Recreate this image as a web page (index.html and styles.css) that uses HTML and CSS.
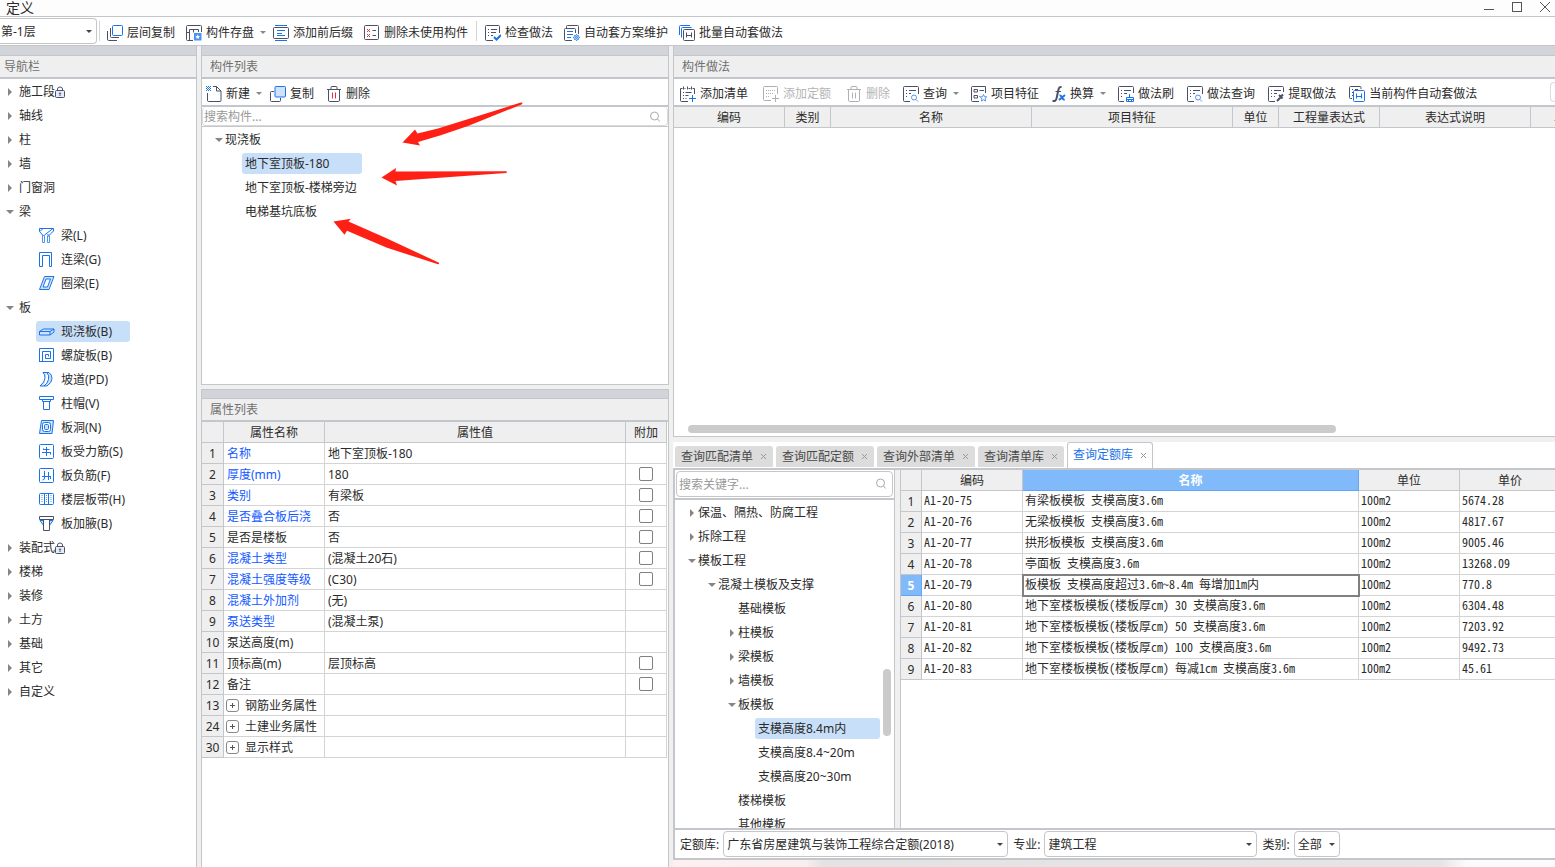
FILE: index.html
```html
<!DOCTYPE html>
<html lang="zh-CN">
<head>
<meta charset="utf-8">
<title>定义</title>
<link rel="stylesheet" href="styles.css">
</head>
<body>
<svg class="sprite" aria-hidden="true">
  <symbol id="i-layercopy" viewBox="0 0 16 16"><rect class="b" x="5.5" y="0.5" width="10" height="10" rx="1"/><path class="d" d="M3.5 3v8.5q0 1 1 1H12M.5 6v8q0 1.500 1 1.500H10"/></symbol>
  <symbol id="i-save" viewBox="0 0 16 16"><path class="d" d="M7 15.500H1.500q-1 0-1-1v-13q0-1 1-1h13q1 0 1 1V7M3.500 15.500v-11h9V7M3.500 7.500h-3M7.500 7.500v-3"/><path class="bf" d="M8 8h7.500v7.500H8z"/><path class="w" d="M11.700 9.500l.7 1.500 1.600.2-1.200 1 .4 1.700-1.500-.9-1.500.9.4-1.700-1.200-1 1.600-.2z"/></symbol>
  <symbol id="i-affix" viewBox="0 0 16 16"><path class="b" d="M2 .5h12M2 15.500h12M4 5.500h8M4 8.500h5M4 10.500h8"/><rect class="d" x=".5" y="2.500" width="15" height="11" rx="1"/></symbol>
  <symbol id="i-unused" viewBox="0 0 16 16"><rect class="d" x=".5" y=".5" width="14" height="14" rx="1"/><path class="r" d="M3 4l3 3M6 4L3 7M3 9l3 3M6 9l-3 3"/><path class="d" d="M8.500 5.500H12M8.500 10.500H12"/></symbol>
  <symbol id="i-check" viewBox="0 0 16 16"><path class="d" d="M8 15.500H1.500q-1 0-1-1v-13q0-1 1-1h12q1 0 1 1V8M3 4.500h1M6 4.500h6M3 7.500h1M6 7.500h5M3 10.500h1M6 10.500h2"/><path class="b2" d="M9 12l2.500 2.500L16 10"/></symbol>
  <symbol id="i-scheme" viewBox="0 0 16 16"><path class="d" d="M8 15.500H1.500q-1 0-1-1v-10q0-1 1-1h9q1 0 1 1V8M2.500 3.500V1.500q0-1 1-1h10q1 0 1 1V9"/><path class="b" d="M3 6.500h6M3 9.500h6M3 12.500h4"/><circle class="lb" cx="12.500" cy="12.500" r="2.500"/><path class="lb dot" d="M12.500 9v7M9 12.500h7M10 10l5 5M15 10l-5 5"/></symbol>
  <symbol id="i-batch" viewBox="0 0 16 16"><path class="b" d="M.5 10V1.500q0-1 1-1H11M2.500 12.500V3.500q0-1 1-1h9"/><rect class="d" x="4.500" y="4.500" width="11" height="11" rx="1"/><path class="d" d="M7.500 7.500v5M12.500 7.500v5M7.500 10.500h5"/></symbol>
  <symbol id="i-new" viewBox="0 0 16 16"><path class="d" d="M1.500 7v7q0 1.500 1 1.500h11.500q1 0 1-1V5l-4.500-4.500H7M10.500.5V5H15"/><path class="b dot" d="M0 .5h5M0 2.500h5M0 4.500h5M1 1.500h4M1 3.500h4"/></symbol>
  <symbol id="i-copy" viewBox="0 0 16 16"><rect class="bl" x="5" y=".5" width="10.500" height="10.500" rx="1"/><path class="d" d="M4 5.500H1.500q-1 0-1 1v8q0 1 1 1h8q1 0 1-1V12"/></symbol>
  <symbol id="i-trash" viewBox="0 0 16 16"><path class="d" d="M1 3.500h14M5 3V1.500q0-1 1-1h4q1 0 1 1V3M2.500 4v10q0 1.500 1 1.500h9q1 0 1-1.500V4"/><path class="r" d="M6.500 6.500v6M9.500 6.500v6"/></symbol>
  <symbol id="i-addlist" viewBox="0 0 16 16"><path class="d" d="M8 15.500H1.500q-1 0-1-1v-12h2M14.500 8V2.500h-2M4.500 2.500h1M8.500 2.500h2M3.500.5v3M7.500.5v3M11.500.5v3M3 6.500h1M5.500 6.500h6M3 9.500h1M5.500 9.500h3M3 12.500h1M5.500 12.500h1"/><path class="b" d="M12.500 9v7M9 12.500h7"/></symbol>
  <symbol id="i-addquota" viewBox="0 0 16 16"><path class="d" d="M8 14.500H1.500q-1 0-1-1v-12q0-1 1-1h12q1 0 1 1V8"/><path class="d dot" d="M3 4.500h10M3 7.500h8M3 10.500h4"/><path class="d" d="M12.500 9v7M9 12.500h7"/></symbol>
  <symbol id="i-query" viewBox="0 0 16 16"><path class="d" d="M7 15.500H1.500q-1 0-1-1v-13q0-1 1-1h13q1 0 1 1V8M3 4.500h1M6 4.500h7M3 7.500h1M6 7.500h2M3 10.500h1"/><circle class="lb" cx="11" cy="11.500" r="2.500"/><path class="lb" d="M13 13.500l2 2"/></symbol>
  <symbol id="i-feature" viewBox="0 0 16 16"><path class="d" d="M8 15.500H1.500q-1 0-1-1v-13q0-1 1-1h13V7M3 3.500h3.500v2.500H3zM3 9.500h3.500v2.500H3zM8.500 4.500H13M8.500 10.500H9"/><path class="lb" d="M12.500 8.500l1 2.200 2.300.2-1.700 1.600.5 2.500-2.100-1.300-2.100 1.300.5-2.500-1.700-1.600 2.300-.2z"/></symbol>
  <symbol id="i-fx" viewBox="0 0 14 16"><path class="d2" d="M9.500 1.500Q7.500 0 6.500 3.500L4.500 12.500Q3.500 16 .5 14.700"/><path class="d" d="M3.500 5.500h5.500"/><path class="b2" d="M7.500 9.500q1.500-.5 2.500 2t2.700 2M13 9l-6 5"/></symbol>
  <symbol id="i-brush" viewBox="0 0 16 16"><path class="d" d="M6 15.500H1.500q-1 0-1-1v-13q0-1 1-1h13q1 0 1 1V7M3 4.500h1M6 4.500h7M3 7.500h1M6 7.500h3M3 10.500h1"/><path class="b" d="M11.500 8v3M8.500 11.500h7v4h-7zM10.500 13.500v2M13.500 13.500v2M8.500 13.500h7"/></symbol>
  <symbol id="i-pick" viewBox="0 0 16 16"><path class="d" d="M7 15.500H1.500q-1 0-1-1v-13q0-1 1-1h13q1 0 1 1V6M3 4.500h1M6 4.500h7M3 7.500h1M6 7.500h3M3 10.500h1M6 10.500h1"/><path class="d2" d="M9 15l4-4M11 9l3.500 3.500M13 10.500l2-2"/></symbol>
  <symbol id="i-auto" viewBox="0 0 16 16"><path class="d" d="M3 12.500H1.500q-1 0-1-1v-10q0-1 1-1H11q1 0 1 1V3M3 3.500h1M3 6.500h1M3 9.500h1M6 3.500h3"/><rect class="b" x="4.500" y="4.500" width="11" height="11" rx="1"/><path class="b" d="M7.500 7.500v5M12.500 7.500v5M7.500 10.500h5"/></symbol>
  <symbol id="i-search" viewBox="0 0 16 16"><circle cx="7.500" cy="7" r="4"/><path d="M10.500 10l2 2.500"/></symbol>
  <symbol id="i-lock" viewBox="0 0 10 12"><rect class="dl" x=".5" y="4.500" width="9" height="7" rx="1"/><path class="d" d="M2.500 4.500V3q0-2 2.500-2t2.500 2v1.500M5 8.500v1.500"/><circle class="d" cx="5" cy="7.500" r=".7"/></symbol>
  <symbol id="i-close" viewBox="0 0 7 7"><path d="M1 1l5 5M6 1l-5 5"/></symbol>
  <symbol id="n-beam" viewBox="0 0 16 16"><path class="b" d="M.5.5h14v2.500L9 8.500M.5.500v3l4 4.500 1-1L14 .5M1 3.500L4 .5M9 8.500V6"/><path class="lb" d="M3.500 7v7.500h2V8M8.500 14.500h2V8M8.500 14.500V8"/></symbol>
  <symbol id="n-link" viewBox="0 0 16 16"><path class="b" d="M.5 14.500V.5h12v14h-2v-11h-7v11z"/></symbol>
  <symbol id="n-ring" viewBox="0 0 16 16"><path class="bl" d="M5.500.5H15L10 13.500H.5z"/><path class="bw" d="M7 3h4.500L8.500 11H4z"/></symbol>
  <symbol id="n-slab" viewBox="0 0 16 16"><path class="bl" d="M.5 7.500l4-2.500h10.500v3l-4 3H.5zM.5 7.500H11l4-2.500M11 7.500v3.500"/></symbol>
  <symbol id="n-spiral" viewBox="0 0 16 16"><path class="b" d="M0 13.500h14.500V.5H.5v13M3.500 14V3.500h8v7h-5v-4h3v2"/></symbol>
  <symbol id="n-ramp" viewBox="0 0 16 16"><path class="bl" d="M4 .5h6q3 2 3 6t-5 7.500H1Q6 10 6 6T4 .5z"/><path class="bw" d="M8 .5q2.500 3 1.500 7t-4.500 6.500"/></symbol>
  <symbol id="n-cap" viewBox="0 0 16 16"><path class="b" d="M.5.5h14v3h-14zM3.500 3.500v2h8v-2M4.500 5.500v8h6v-8"/></symbol>
  <symbol id="n-hole" viewBox="0 0 16 16"><path class="bl" d="M2.500.5h12l-1.500 13H.5z"/><rect class="bw" x="3.500" y="2.500" width="8" height="9" rx="2"/><rect class="bl" x="5.500" y="4.500" width="4" height="5" rx="1"/></symbol>
  <symbol id="n-force" viewBox="0 0 16 16"><rect class="b" x=".5" y=".5" width="14" height="14" rx="1"/><path class="b" d="M3 8.500h9M4.500 5.500h6M4.500 6V4.500M7.500 3v9M11.500 8.500v2"/></symbol>
  <symbol id="n-neg" viewBox="0 0 16 16"><rect class="b" x=".5" y=".5" width="14" height="14" rx="1"/><path class="b" d="M3 8.500h9M5.500 3v7q0 2-2 2M9.500 4v8M11.500 9v2"/></symbol>
  <symbol id="n-band" viewBox="0 0 16 16"><rect class="b" x=".5" y="1.500" width="14" height="11" rx="1"/><path class="b" d="M5.500 2v11M9.500 2v11"/><path class="lb dot" d="M3 3v8M7.500 3v8M12 3v8"/></symbol>
  <symbol id="n-haunch" viewBox="0 0 16 16"><path class="bl" d="M1 4.500h13L10 10H5z"/><path class="dw" d="M.5.5h14v3h-14zM4.500 3.500v11h6v-11"/></symbol>
</svg>

<div class="app">
  <header class="titlebar">
    <h1 class="titlebar-text">定义</h1>
    <div class="window-controls">
      <button aria-label="最小化"><svg viewBox="0 0 10 10"><path d="M0 7.500h10"/></svg></button>
      <button aria-label="最大化"><svg viewBox="0 0 10 10"><rect x=".5" y=".5" width="9" height="9"/></svg></button>
      <button aria-label="关闭"><svg viewBox="0 0 10 10"><path d="M0 0l10 10M10 0L0 10"/></svg></button>
    </div>
  </header>

  <div class="toolbar main-toolbar">
    <span class="select floor-select"><select aria-label="楼层"><option>第-1层</option></select></span>
    <span class="divider"></span>
    <button class="tool"><svg><use href="#i-layercopy"/></svg>层间复制</button>
    <button class="tool has-caret"><svg><use href="#i-save"/></svg>构件存盘</button>
    <button class="tool"><svg><use href="#i-affix"/></svg>添加前后缀</button>
    <button class="tool"><svg><use href="#i-unused"/></svg>删除未使用构件</button>
    <span class="divider"></span>
    <button class="tool"><svg><use href="#i-check"/></svg>检查做法</button>
    <button class="tool"><svg><use href="#i-scheme"/></svg>自动套方案维护</button>
    <button class="tool"><svg><use href="#i-batch"/></svg>批量自动套做法</button>
  </div>

  <main class="workspace">
    <nav class="panel nav-panel">
      <div class="strip"></div>
      <h2 class="panel-title nav-title">导航栏</h2>
      <ul class="tree">
        <li class="node closed">施工段<svg class="lock"><use href="#i-lock"/></svg></li>
        <li class="node closed">轴线</li>
        <li class="node closed">柱</li>
        <li class="node closed">墙</li>
        <li class="node closed">门窗洞</li>
        <li class="node open">梁</li>
        <li class="leaf"><a href="#beam"><svg><use href="#n-beam"/></svg>梁(L)</a></li>
        <li class="leaf"><a href="#link"><svg><use href="#n-link"/></svg>连梁(G)</a></li>
        <li class="leaf"><a href="#ring"><svg><use href="#n-ring"/></svg>圈梁(E)</a></li>
        <li class="node open">板</li>
        <li class="leaf"><a class="selected" href="#slab"><svg><use href="#n-slab"/></svg>现浇板(B)</a></li>
        <li class="leaf"><a href="#spiral"><svg><use href="#n-spiral"/></svg>螺旋板(B)</a></li>
        <li class="leaf"><a href="#ramp"><svg><use href="#n-ramp"/></svg>坡道(PD)</a></li>
        <li class="leaf"><a href="#cap"><svg><use href="#n-cap"/></svg>柱帽(V)</a></li>
        <li class="leaf"><a href="#hole"><svg><use href="#n-hole"/></svg>板洞(N)</a></li>
        <li class="leaf"><a href="#force"><svg><use href="#n-force"/></svg>板受力筋(S)</a></li>
        <li class="leaf"><a href="#neg"><svg><use href="#n-neg"/></svg>板负筋(F)</a></li>
        <li class="leaf"><a href="#band"><svg><use href="#n-band"/></svg>楼层板带(H)</a></li>
        <li class="leaf"><a href="#haunch"><svg><use href="#n-haunch"/></svg>板加腋(B)</a></li>
        <li class="node closed">装配式<svg class="lock"><use href="#i-lock"/></svg></li>
        <li class="node closed">楼梯</li>
        <li class="node closed">装修</li>
        <li class="node closed">土方</li>
        <li class="node closed">基础</li>
        <li class="node closed">其它</li>
        <li class="node closed">自定义</li>
      </ul>
    </nav>

    <div class="middle">
      <section class="panel component-panel">
        <div class="strip"></div>
        <h2 class="panel-title">构件列表</h2>
        <div class="toolbar panel-toolbar component-toolbar">
          <button class="tool has-caret"><svg><use href="#i-new"/></svg>新建</button>
          <button class="tool"><svg><use href="#i-copy"/></svg>复制</button>
          <button class="tool"><svg><use href="#i-trash"/></svg>删除</button>
        </div>
        <div class="search component-search">
          <input type="text" aria-label="搜索构件" placeholder="搜索构件...">
          <svg><use href="#i-search"/></svg>
        </div>
        <ul class="tree component-tree">
          <li class="node open">现浇板</li>
          <li class="item"><span class="selected">地下室顶板-180</span></li>
          <li class="item"><span>地下室顶板-楼梯旁边</span></li>
          <li class="item"><span>电梯基坑底板</span></li>
        </ul>
        <svg class="arrows" viewBox="330 100 200 170" aria-hidden="true">
          <path d="M402.500 142.500L415 129.500 417.500 133.500 438 128.500 521 102.500Q524 102.500 521.500 104.500L468 126 440 135.500 418 142 420 145.500z"/>
          <path d="M381.500 177.500L396 168 395.500 171.500 506 171.300Q508 172 506 173L433 178.300 395.500 181 397 185.500z"/>
          <path d="M333.500 221.500L351 218.700 348.500 221.500 387 238.500 438.500 262.500Q440 264 438 264.300L387 247.700 347 230.700 344.500 234.800z"/>
        </svg>
      </section>

      <section class="panel property-panel">
        <div class="strip"></div>
        <h2 class="panel-title">属性列表</h2>
        <table class="grid property-grid">
          <colgroup><col class="c-num"><col class="c-name"><col><col class="c-extra"></colgroup>
          <thead><tr><th></th><th>属性名称</th><th>属性值</th><th>附加</th></tr></thead>
          <tbody>
            <tr><th>1</th><td class="blue">名称</td><td>地下室顶板-180</td><td></td></tr>
            <tr><th>2</th><td class="blue">厚度(mm)</td><td>180</td><td><input type="checkbox" aria-label="厚度附加"></td></tr>
            <tr><th>3</th><td class="blue">类别</td><td>有梁板</td><td><input type="checkbox" aria-label="类别附加"></td></tr>
            <tr><th>4</th><td class="blue">是否叠合板后浇</td><td>否</td><td><input type="checkbox" aria-label="是否叠合板后浇附加"></td></tr>
            <tr><th>5</th><td>是否是楼板</td><td>否</td><td><input type="checkbox" aria-label="是否是楼板附加"></td></tr>
            <tr><th>6</th><td class="blue">混凝土类型</td><td>(混凝土20石)</td><td><input type="checkbox" aria-label="混凝土类型附加"></td></tr>
            <tr><th>7</th><td class="blue">混凝土强度等级</td><td>(C30)</td><td><input type="checkbox" aria-label="混凝土强度等级附加"></td></tr>
            <tr><th>8</th><td class="blue">混凝土外加剂</td><td>(无)</td><td></td></tr>
            <tr><th>9</th><td class="blue">泵送类型</td><td>(混凝土泵)</td><td></td></tr>
            <tr><th>10</th><td>泵送高度(m)</td><td></td><td></td></tr>
            <tr><th>11</th><td>顶标高(m)</td><td>层顶标高</td><td><input type="checkbox" aria-label="顶标高附加"></td></tr>
            <tr><th>12</th><td>备注</td><td></td><td><input type="checkbox" aria-label="备注附加"></td></tr>
            <tr><th>13</th><td><button class="expand" aria-label="展开钢筋业务属性"></button>钢筋业务属性</td><td></td><td></td></tr>
            <tr><th>24</th><td><button class="expand" aria-label="展开土建业务属性"></button>土建业务属性</td><td></td><td></td></tr>
            <tr><th>30</th><td><button class="expand" aria-label="展开显示样式"></button>显示样式</td><td></td><td></td></tr>
          </tbody>
        </table>
      </section>
    </div>

    <div class="right">
      <section class="panel method-panel">
        <div class="strip"></div>
        <h2 class="panel-title">构件做法</h2>
        <div class="toolbar panel-toolbar method-toolbar">
          <div class="tool-group">
            <button class="tool"><svg><use href="#i-addlist"/></svg>添加清单</button>
            <button class="tool" disabled><svg><use href="#i-addquota"/></svg>添加定额</button>
            <button class="tool" disabled><svg><use href="#i-trash"/></svg>删除</button>
          </div>
          <button class="tool has-caret"><svg><use href="#i-query"/></svg>查询</button>
          <button class="tool"><svg><use href="#i-feature"/></svg>项目特征</button>
          <button class="tool has-caret"><svg class="fx"><use href="#i-fx"/></svg>换算</button>
          <button class="tool"><svg><use href="#i-brush"/></svg>做法刷</button>
          <button class="tool"><svg><use href="#i-query"/></svg>做法查询</button>
          <button class="tool"><svg><use href="#i-pick"/></svg>提取做法</button>
          <button class="tool"><svg><use href="#i-auto"/></svg>当前构件自动套做法</button>
          <button class="more" aria-label="更多"></button>
        </div>
        <table class="grid method-grid">
          <colgroup><col class="m-code"><col class="m-short"><col class="m-long"><col class="m-long"><col class="m-short"><col class="m-expr"><col class="m-desc"><col class="m-last"></colgroup>
          <thead><tr><th>编码</th><th>类别</th><th>名称</th><th>项目特征</th><th>单位</th><th>工程量表达式</th><th>表达式说明</th><th>单价</th></tr></thead>
        </table>
        <div class="scroll-x"><div class="thumb"></div></div>
      </section>

      <section class="query-panel">
        <div class="tabs" role="tablist">
          <button class="tab" role="tab">查询匹配清单<svg><use href="#i-close"/></svg></button>
          <button class="tab" role="tab">查询匹配定额<svg><use href="#i-close"/></svg></button>
          <button class="tab" role="tab">查询外部清单<svg><use href="#i-close"/></svg></button>
          <button class="tab" role="tab">查询清单库<svg><use href="#i-close"/></svg></button>
          <button class="tab active" role="tab" aria-selected="true">查询定额库<svg><use href="#i-close"/></svg></button>
        </div>
        <div class="query-body">
          <div class="chapters">
            <div class="search chapter-search">
              <input type="text" aria-label="搜索关键字" placeholder="搜索关键字...">
              <svg><use href="#i-search"/></svg>
            </div>
            <ul class="tree chapter-tree">
              <li class="node closed l1">保温、隔热、防腐工程</li>
              <li class="node closed l1">拆除工程</li>
              <li class="node open l1">模板工程</li>
              <li class="node open l2">混凝土模板及支撑</li>
              <li class="node l3">基础模板</li>
              <li class="node closed l3">柱模板</li>
              <li class="node closed l3">梁模板</li>
              <li class="node closed l3">墙模板</li>
              <li class="node open l3">板模板</li>
              <li class="item"><span class="selected">支模高度8.4m内</span></li>
              <li class="item"><span>支模高度8.4~20m</span></li>
              <li class="item"><span>支模高度20~30m</span></li>
              <li class="node l3">楼梯模板</li>
              <li class="node l3">其他模板</li>
            </ul>
            <div class="thumb-y"></div>
          </div>
          <div class="quota">
            <table class="grid quota-grid">
              <colgroup><col class="q-num"><col class="q-mid"><col class="q-name"><col class="q-mid"><col class="q-mid"></colgroup>
              <thead><tr><th></th><th>编码</th><th class="on">名称</th><th>单位</th><th>单价</th></tr></thead>
              <tbody>
                <tr><th>1</th><td>A1-20-75</td><td>有梁板模板 支模高度3.6m</td><td>100m2</td><td>5674.28</td></tr>
                <tr><th>2</th><td>A1-20-76</td><td>无梁板模板 支模高度3.6m</td><td>100m2</td><td>4817.67</td></tr>
                <tr><th>3</th><td>A1-20-77</td><td>拱形板模板 支模高度3.6m</td><td>100m2</td><td>9005.46</td></tr>
                <tr><th>4</th><td>A1-20-78</td><td>亭面板 支模高度3.6m</td><td>100m2</td><td>13268.09</td></tr>
                <tr><th class="on">5</th><td>A1-20-79</td><td class="focused">板模板 支模高度超过3.6m~8.4m 每增加1m内</td><td>100m2</td><td>770.8</td></tr>
                <tr><th>6</th><td>A1-20-80</td><td>地下室楼板模板(楼板厚cm) 30 支模高度3.6m</td><td>100m2</td><td>6304.48</td></tr>
                <tr><th>7</th><td>A1-20-81</td><td>地下室楼板模板(楼板厚cm) 50 支模高度3.6m</td><td>100m2</td><td>7203.92</td></tr>
                <tr><th>8</th><td>A1-20-82</td><td>地下室楼板模板(楼板厚cm) 100 支模高度3.6m</td><td>100m2</td><td>9492.73</td></tr>
                <tr><th>9</th><td>A1-20-83</td><td>地下室楼板模板(楼板厚cm) 每减1cm 支模高度3.6m</td><td>100m2</td><td>45.61</td></tr>
              </tbody>
            </table>
          </div>
        </div>
        <div class="filters">
          <label for="library">定额库:</label>
          <span class="select library"><select id="library"><option>广东省房屋建筑与装饰工程综合定额(2018)</option></select></span>
          <label for="major">专业:</label>
          <span class="select major"><select id="major"><option>建筑工程</option></select></span>
          <label for="kind">类别:</label>
          <span class="select kind"><select id="kind"><option>全部</option></select></span>
        </div>
        <div class="backdrop"></div>
      </section>
    </div>
  </main>
</div>
</body>
</html>
```
FILE: styles.css
```css
:root {
  --line: #c3c6cb;
  --grid: #d4d4d4;
  --head: #efefef;
  --strip: #d2d4da;
  --select: #c8dff9;
  --dark: #4b5068;
  --blue: #1a73e8;
  --light-blue: #4d94ee;
  --pale: #cfe2fb;
}

* { box-sizing: border-box; }

body {
  margin: 0;
  background: #f0f0f0;
  color: #2b2b2b;
  font: 12px/20px "Noto Sans", "Noto Sans CJK SC", sans-serif;
}

button, input, select { font: inherit; color: inherit; }
button { border: 0; padding: 0; background: none; }
h1, h2, ul { margin: 0; padding: 0; font-weight: normal; list-style: none; }
a { color: inherit; text-decoration: none; }
svg { flex: none; width: 16px; height: 16px; fill: none; }

.sprite { position: absolute; width: 0; height: 0; }
.d, .d2, .dl, .dw { stroke: var(--dark); }
.b, .b2, .bl, .bw { stroke: var(--blue); }
.d2, .b2 { stroke-width: 2px; }
.dl { fill: #e3ecf8; }
.dw, .bw { fill: #fff; }
.bl { fill: var(--pale); }
.bf { fill: var(--light-blue); }
.lb { stroke: var(--light-blue); }
.w { fill: #fff; }
.r { stroke: #e0343c; }
.dot { stroke-dasharray: 1px 1px; }

.app { display: flex; flex-direction: column; height: 100vh; overflow: hidden; }

/* Title bar and main toolbar */
.titlebar {
  display: flex;
  justify-content: space-between;
  height: 17px;
  flex: none;
  padding-left: 6px;
  background: #fdfdfd;
  border-bottom: 1px solid var(--line);
}
.titlebar-text { font-size: 14px; line-height: 15px; }
.window-controls { display: flex; gap: 18px; padding: 2px 5px 0 0; align-items: flex-start; }
.window-controls button { display: flex; }
.window-controls svg { width: 10px; height: 10px; stroke: #555; }

.toolbar { display: flex; align-items: center; background: #fff; flex: none; white-space: nowrap; }
.main-toolbar { height: 29px; border-bottom: 1px solid var(--line); gap: 11px; }
.main-toolbar .divider { width: 1px; height: 20px; background: #d4d4d4; margin: 0 -3px; }
.main-toolbar .floor-select + .divider { margin: 0 -4px 0 -9px; }
.tool { display: flex; align-items: center; gap: 4px; padding-top: 3px; line-height: 20px; }
.tool .fx { width: 14px; }
.tool:disabled { color: #b4b4b4; }
.tool:disabled svg { filter: grayscale(1); opacity: .45; }
.has-caret::after {
  content: "";
  margin: 0 -4px 0 2px;
  border: 3px solid transparent;
  border-top: 3px solid #888;
  border-bottom: 0;
}
.method-toolbar .has-caret::after { margin-right: -1px; }

.select { position: relative; display: flex; }
.select select {
  width: 100%;
  height: 26px;
  appearance: none;
  padding: 2px 14px 0 3px;
  border: 1px solid #c6c6c6;
  border-radius: 4px;
  background: #fff;
}
.select::after {
  content: "";
  position: absolute;
  right: 5px;
  top: 12px;
  border: 3px solid transparent;
  border-top: 3px solid #444;
  border-bottom: 0;
  pointer-events: none;
}
.floor-select { width: 97px; }
.floor-select select { border-left: 0; padding-left: 1px; border-radius: 0 4px 4px 0; }

/* Docked panels */
.workspace { display: grid; grid-template-columns: 197px 468px 1fr; column-gap: 4px; flex: 1; min-height: 0; }
.panel { background: #fff; border: 1px solid var(--line); border-top: 0; display: flex; flex-direction: column; position: relative; min-width: 0; overflow: hidden; }
.strip { height: 10px; background: var(--strip); border-bottom: 1px solid var(--line); flex: none; }
.panel-title { height: 23px; padding-left: 8px; border-bottom: 2px solid var(--line); background: var(--head); color: #707070; font-size: 12px; line-height: 22px; flex: none; }
.nav-title { padding-left: 4px; }
.nav-panel { border-left: 0; border-bottom: 0; }
.middle { display: flex; flex-direction: column; gap: 4px; min-height: 0; }
.component-panel { flex: 338 1 0; }
.property-panel { flex: 479 1 0; border-bottom: 0; }
.property-panel .strip { border-top: 1px solid var(--line); }
.right { display: flex; flex-direction: column; gap: 5px; min-width: 0; min-height: 0; }
.method-panel { flex: 390 1 0; border-right: 0; }
.query-panel { flex: 426 1 0; display: flex; flex-direction: column; min-height: 0; background: #fff; }
.panel-toolbar { height: 28px; border-bottom: 2px solid var(--line); }
.component-toolbar { gap: 12px; padding-left: 4px; }
.method-toolbar { gap: 13px; padding-left: 6px; }
.tool-group { display: flex; gap: 15px; }
.more { margin-left: auto; width: 5px; height: 20px; border: 1px solid #ddd; border-right: 0; border-radius: 4px 0 0 4px; }

/* Trees */
.tree li { display: flex; align-items: center; height: 24px; position: relative; white-space: nowrap; }
.tree .node { padding: 2px 0 0 19px; }
.node::before { content: ""; position: absolute; left: 8px; border: 4px solid transparent; }
.closed::before { border-left: 4px solid #858585; border-right: 0; }
.open::before { left: 6px; border-top: 4px solid #858585; border-bottom: 0; }
.tree .lock { width: 10px; height: 12px; }
.leaf a { display: flex; align-items: center; gap: 6px; height: 21px; min-width: 94px; margin: 1px 0 0 36px; padding: 1px 3px 0; border-radius: 3px; }
.item span { height: 21px; margin-top: 1px; padding: 0 3px; border-radius: 3px; line-height: 21px; }
.selected { background: var(--select); }
.component-tree .node { padding-left: 23px; }
.component-tree .node::before { left: 13px; }
.component-tree .item { padding-left: 40px; }
.component-tree .item span { min-width: 120px; }

.search { position: relative; flex: none; }
.search input { display: block; width: 100%; border: 1px solid #c6c6c6; border-radius: 4px; padding: 1px 30px 0 2px; background: #fff; }
.search input::placeholder { color: #999; opacity: 1; }
.search svg { position: absolute; right: 5px; top: 50%; margin-top: -8px; stroke: #aaa; }
.component-search { height: 20px; border-bottom: 1px solid var(--line); }
.component-search input { height: 19px; border-color: #dadada; border-top: 0; padding-left: 1px; }

.arrows { position: absolute; left: 128px; top: 54px; width: 200px; height: 170px; pointer-events: none; }
.arrows path { fill: #ff2015; }

/* Grids */
.grid { table-layout: fixed; border-collapse: separate; border-spacing: 0; }
.grid th, .grid td { height: 21px; padding: 2px 0 0; line-height: 18px; font-weight: normal; white-space: nowrap; overflow: hidden; }
.grid th { background: var(--head); border-right: 1px solid var(--line); border-bottom: 1px solid var(--line); }
.grid td { border-right: 1px solid var(--grid); border-bottom: 1px solid var(--grid); padding-left: 3px; }
.property-grid { width: calc(100% - 1px); }
.c-num { width: 22px; }
.c-name { width: 101px; }
.c-extra { width: 41px; }
.property-grid .blue { color: #1259ff; }
.property-grid input { appearance: none; display: block; width: 14px; height: 14px; margin: 0 auto; border: 1px solid #808080; border-radius: 2px; background: #fff; }
.property-grid td:last-child { padding: 0; }
.expand { display: inline-block; width: 13px; height: 13px; margin: 0 6px 0 -1px; border: 1px solid #888; border-radius: 3px; vertical-align: -1px; background: linear-gradient(#555, #555) center / 5px 1px no-repeat, linear-gradient(#555, #555) center / 1px 5px no-repeat; }

.method-grid { width: 928px; flex: none; }
.m-code { width: 111px; }
.m-short { width: 46px; }
.m-long { width: 201px; }
.m-expr { width: 101px; }
.m-desc { width: 151px; }
.m-last { width: 71px; }
.scroll-x { margin-top: auto; padding: 0 14px 3px; }
.thumb { width: 76%; height: 8px; border-radius: 4px; background: #cbcbcb; }

/* Query panel */
.tabs { display: flex; align-items: flex-end; gap: 3px; height: 28px; padding: 0 2px; border-bottom: 2px solid var(--line); flex: none; }
.tab { display: flex; align-items: center; gap: 7px; height: 21px; margin-bottom: 1px; padding: 1px 6px 0; border-radius: 3px 3px 0 0; background: #dcdcdc; color: #4a4a4a; line-height: 20px; white-space: nowrap; }
.tab svg { width: 7px; height: 7px; stroke: #999; }
.tab.active { height: 26px; margin: 0; padding: 0 5px; border: 1px solid var(--line); border-bottom: 0; background: #fff; color: var(--blue); }
.query-body { display: flex; flex: 1; min-height: 0; background: #f0f0f0; }
.chapters { display: flex; flex-direction: column; width: 222px; flex: none; position: relative; overflow: hidden; background: #fff; border-left: 2px solid var(--line); border-right: 1px solid var(--line); }
.chapter-search { padding: 1px; height: 30px; border-bottom: 2px solid var(--line); }
.chapter-search input { height: 26px; }
.chapter-tree .l1 { padding-left: 23px; }
.chapter-tree .l1::before { left: 15px; }
.chapter-tree .l2 { padding-left: 43px; }
.chapter-tree .l2::before { left: 33px; }
.chapter-tree .l3 { padding-left: 63px; }
.chapter-tree .l3::before { left: 55px; }
.chapter-tree .l1.open::before { left: 13px; }
.chapter-tree .l3.open::before { left: 53px; }
.chapter-tree .item { padding-left: 80px; }
.chapter-tree .item span { min-width: 125px; }
.thumb-y { position: absolute; right: 3px; top: 199px; width: 8px; height: 67px; border-radius: 4px; background: #cbcbcb; }
.quota { flex: 1; min-width: 0; margin-left: 5px; overflow: hidden; background: #fff; border-left: 1px solid var(--line); }
.quota-grid { width: 660px; }
.q-num { width: 21px; }
.q-mid { width: 101px; }
.q-name { width: 336px; }
.quota-grid td { padding: 0 0 0 2px; vertical-align: top; font-family: "Noto Sans CJK SC", sans-serif; font-feature-settings: "hwid"; }
.quota-grid .on { background: #80bafa; border-color: #64a6ee; color: #fff; font-weight: bold; }
.quota-grid .focused { outline: 2px solid #808080; outline-offset: -1px; }

.filters { display: flex; align-items: center; height: 32px; padding: 0 5px; border: 2px solid var(--line); border-right: 0; flex: none; white-space: nowrap; }
.filters label { padding-top: 2px; }
.filters .select { margin: 0 5px 0 4px; }
.library { width: 285px; }
.major { width: 213px; }
.kind { width: 46px; }
.backdrop { height: 7px; flex: none; background: linear-gradient(90deg, #fdf0f1 0, #f8eff0 15%, #e3e3e3 17%, #e5e5e5 87%, #fbfbfb 90%); }
```
